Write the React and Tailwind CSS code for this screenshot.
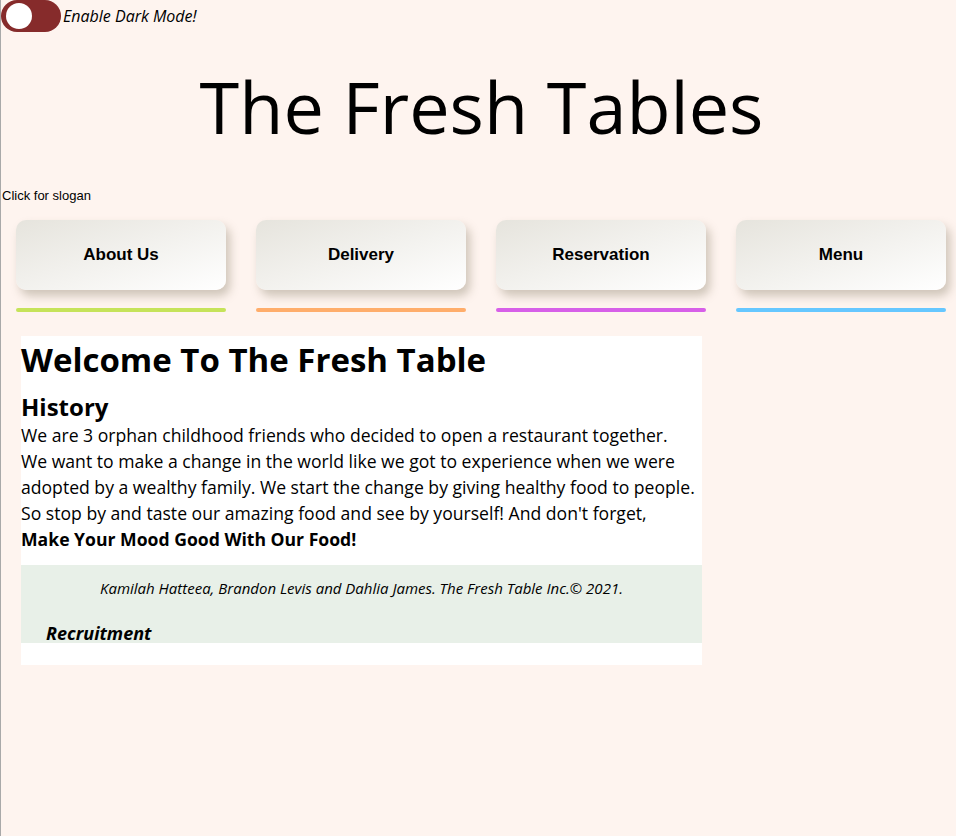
import React, { useState } from 'react'

const COMIC = { fontFamily: '"Comic Sans MS", "Open Sans", sans-serif' }

const NAV = [
  { label: 'About Us', bar: 'bg-[#c6e35a]' },
  { label: 'Delivery', bar: 'bg-[#ffad6b]' },
  { label: 'Reservation', bar: 'bg-[#d75fe8]' },
  { label: 'Menu', bar: 'bg-[#66c7ff]' },
]

export default function App() {
  const [dark, setDark] = useState(false)

  return (
    <div className="min-h-[836px] bg-[#fef4ef] border-l border-[#a9a9a9] text-black" style={COMIC}>
      <div className="flex items-center h-8">
        <button
          onClick={() => setDark(!dark)}
          className="w-[60px] h-8 rounded-full bg-[#862b2b] flex items-center px-[5px]"
        >
          <span className="w-[26px] h-[26px] rounded-full bg-white block" />
        </button>
        <span className="italic text-[16px] ml-[2px]">Enable Dark Mode!</span>
      </div>

      <h1 className="text-center text-[72px] leading-none mt-[38px] pl-[6px]">The Fresh Tables</h1>

      <p className="text-[13px] mt-[44px] ml-px" style={{ fontFamily: '"Liberation Sans", Arial, sans-serif' }}>
        Click for slogan
      </p>

      <nav className="grid grid-cols-[repeat(4,210px)] gap-[30px] pl-[15px] mt-[14px]">
        {NAV.map((n) => (
          <div key={n.label} className="flex flex-col">
            <a
              href="#"
              className="h-[70px] rounded-[10px] bg-linear-to-br from-[#e6e4dd] to-[#ffffff] shadow-[4px_6px_10px_rgba(150,140,120,0.45)] flex items-center justify-center text-[17px] font-bold"
              style={{ fontFamily: '"Liberation Sans", Arial, sans-serif' }}
            >
              {n.label}
            </a>
            <div className={`h-1 rounded-full mt-[18px] ${n.bar}`} />
          </div>
        ))}
      </nav>

      <main className="ml-5 mt-6 w-[681px] bg-white">
        <h2 className="text-[33px] font-bold leading-[40px] pt-1">Welcome To The Fresh Table</h2>
        <h3 className="text-[24px] font-bold leading-[30px] mt-3">History</h3>
        <p className="text-[17.6px] leading-[26px] whitespace-nowrap">
          We are 3 orphan childhood friends who decided to open a restaurant together.<br />
          We want to make a change in the world like we got to experience when we were<br />
          adopted by a wealthy family. We start the change by giving healthy food to people.<br />
          So stop by and taste our amazing food and see by yourself! And don't forget,<br />
          <b>Make Your Mood Good With Our Food!</b>
        </p>
        <footer className="mt-[13px] bg-[#e8f0e8] pt-[13px] pb-px">
          <p className="text-center italic text-[15px] leading-[20px]">
            Kamilah Hatteea, Brandon Levis and Dahlia James. The Fresh Table Inc.© 2021.
          </p>
          <h4 className="italic font-bold text-[18px] leading-[18px] ml-[25px] mt-[26px]">Recruitment</h4>
        </footer>
        <div className="h-[22px]" />
      </main>
    </div>
  )
}
